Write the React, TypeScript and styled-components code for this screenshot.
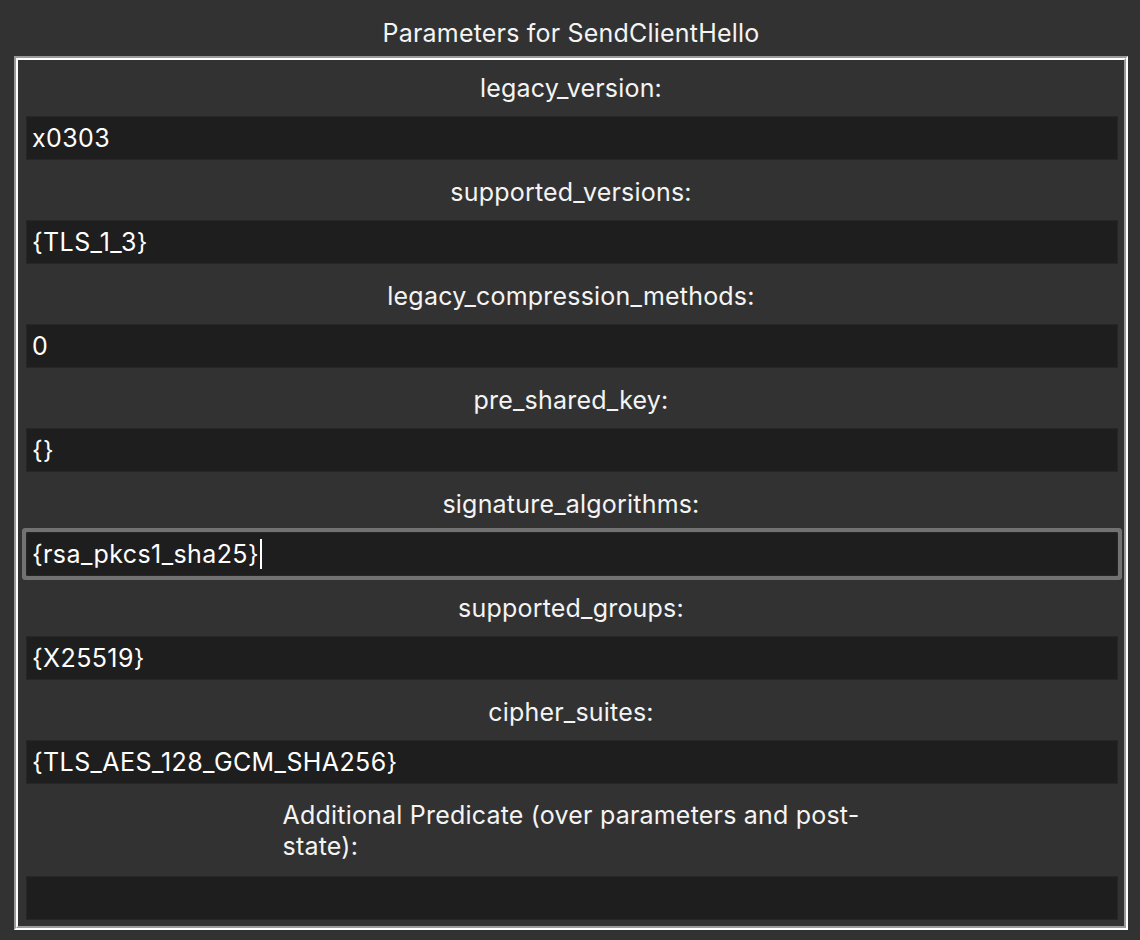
import styled, { createGlobalStyle } from 'styled-components'

const params = [
  { name: 'legacy_version:', value: 'x0303' },
  { name: 'supported_versions:', value: '{TLS_1_3}' },
  { name: 'legacy_compression_methods:', value: '0' },
  { name: 'pre_shared_key:', value: '{}' },
  { name: 'signature_algorithms:', value: '{rsa_pkcs1_sha25}', active: true },
  { name: 'supported_groups:', value: '{X25519}' },
  { name: 'cipher_suites:', value: '{TLS_AES_128_GCM_SHA256}' },
]

export default function App() {
  return (
    <Page>
      <GlobalStyle />
      <Title>Parameters for SendClientHello</Title>

      <Frame>
        <FrameInner>
          {params.map((p) => (
            <Row key={p.name}>
              <Label>{p.name}</Label>
              <Entry $active={!!p.active}>
                {p.value}
                {p.active && <Caret />}
              </Entry>
            </Row>
          ))}

          <Row>
            <WrapLabel>
              <WrapText>
                Additional Predicate (over parameters and post-
                <br />
                state):
              </WrapText>
            </WrapLabel>
            <Entry $active={false} />
          </Row>
        </FrameInner>
      </Frame>
    </Page>
  )
}

const GlobalStyle = createGlobalStyle`
  html, body {
    margin: 0;
    padding: 0;
    background: #323232;
  }

  body {
    font-family: Inter, "Noto Sans", "Liberation Sans", sans-serif;
    font-size: 25px;
    color: #f4f4f4;
  }
`

const Page = styled.div`
  width: 1140px;
  height: 940px;
  display: flex;
  flex-direction: column;
  box-sizing: border-box;
  padding: 0 12px 10px 14px;
  background: #323232;
`

const Title = styled.div`
  height: 56px;
  display: flex;
  align-items: center;
  justify-content: center;
  padding-top: 10px;
  box-sizing: border-box;
  letter-spacing: 0.2px;
`

const Frame = styled.div`
  flex: 1;
  display: flex;
  border: 2px solid;
  border-color: #9a9a9a #ffffff #ffffff #9a9a9a;
`

const FrameInner = styled.div`
  flex: 1;
  display: flex;
  flex-direction: column;
  border: 2px solid;
  border-color: #ffffff #9a9a9a #9a9a9a #ffffff;
  padding: 0 0 2px;
`

const Row = styled.div`
  display: flex;
  flex-direction: column;
`

const Label = styled.div`
  height: 52px;
  padding-top: 4px;
  box-sizing: border-box;
  display: flex;
  align-items: center;
  justify-content: center;
  letter-spacing: 0.2px;
`

const WrapLabel = styled.div`
  height: 84px;
  padding-top: 2px;
  box-sizing: border-box;
  display: flex;
  align-items: center;
  justify-content: center;
`

const WrapText = styled.div`
  display: inline-block;
  text-align: left;
  line-height: 31px;
  letter-spacing: 0.2px;
`

const Entry = styled.div<{ $active: boolean }>`
  height: 44px;
  margin: 4px 6px 4px 8px;
  padding: 0 5px;
  box-sizing: border-box;
  display: flex;
  align-items: center;
  background: #1e1e1e;
  border: 1px solid #262626;
  color: #ffffff;
  letter-spacing: 0.4px;
  border-radius: ${(p) => (p.$active ? '1px' : '0')};
  box-shadow: ${(p) => (p.$active ? '0 0 0 4px #727272' : 'none')};
`

const Caret = styled.span`
  display: inline-block;
  width: 2px;
  height: 30px;
  margin-left: 1px;
  background: #ffffff;
`
